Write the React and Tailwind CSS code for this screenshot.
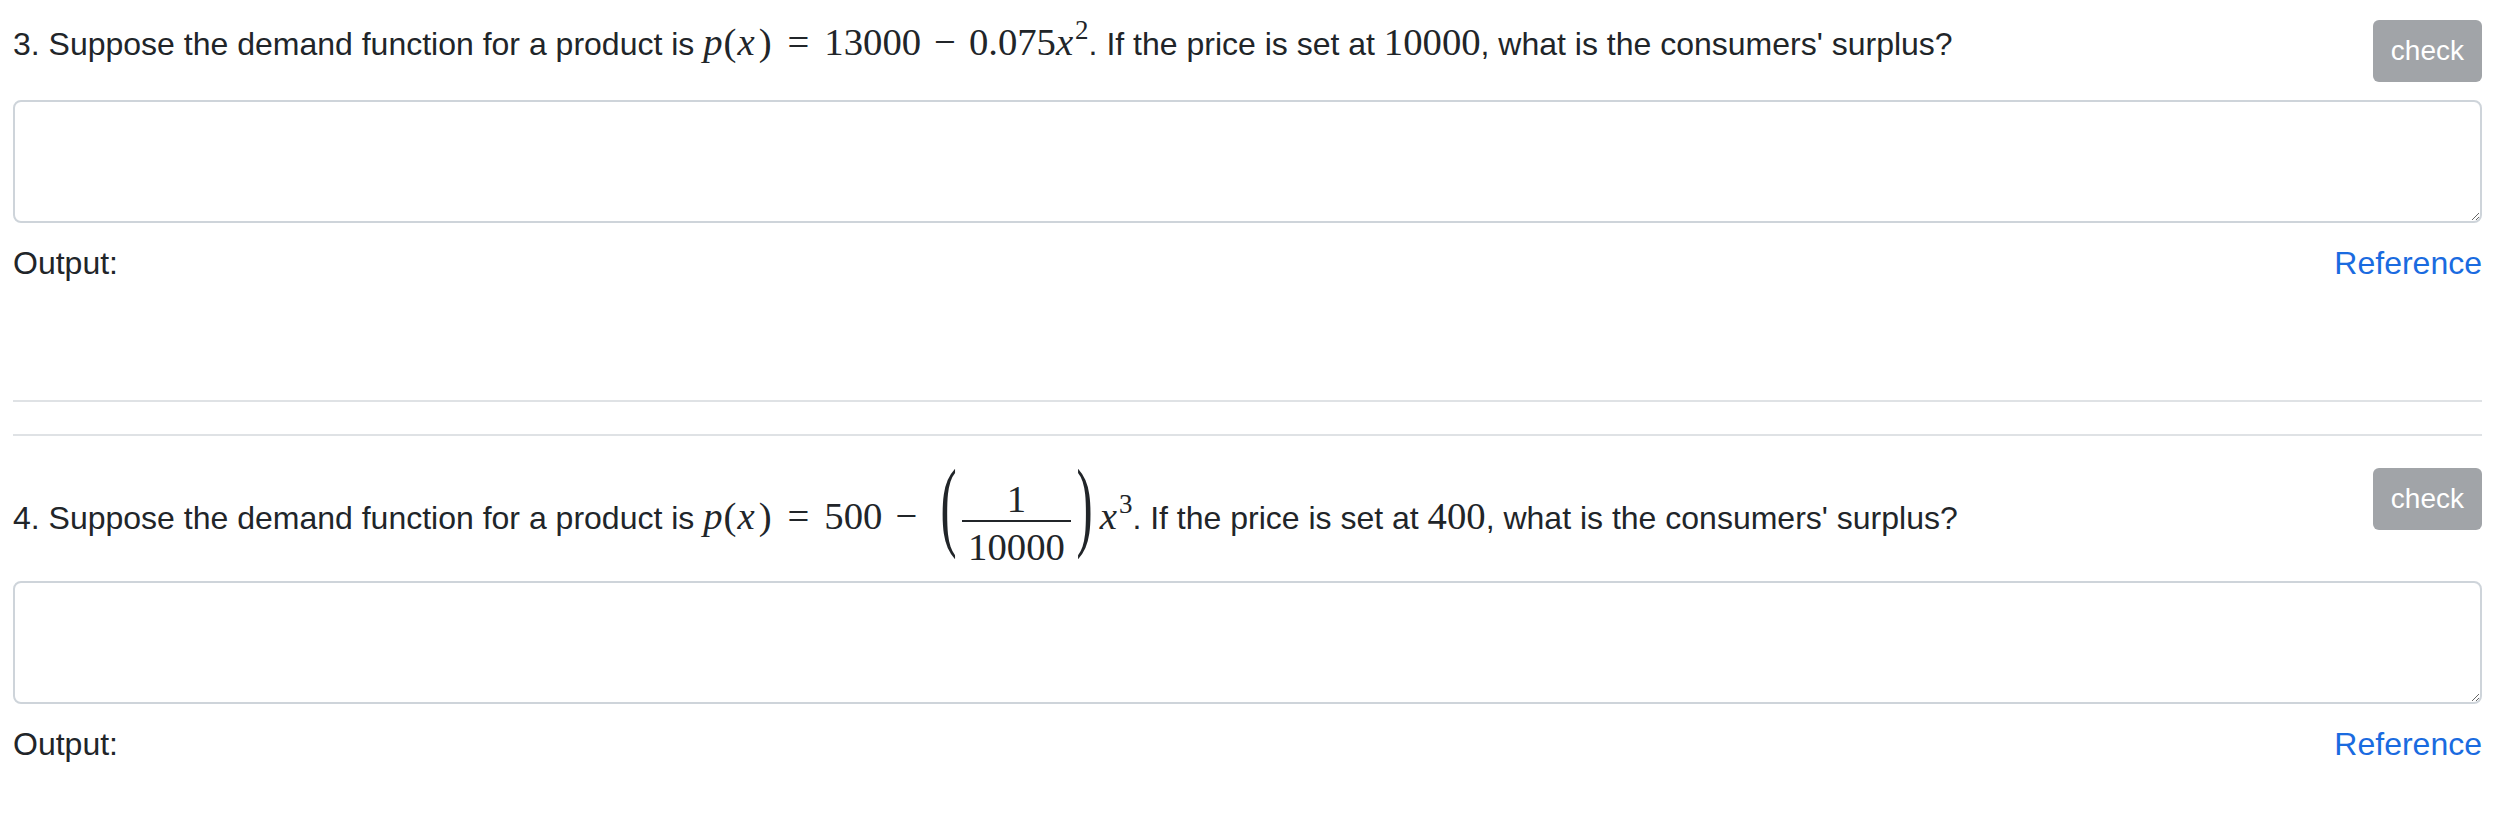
import React from 'react';

const serif = "font-['Liberation_Serif',serif] text-[38.7px] leading-none";

// inline math atom
const M = ({ children, className = '' }) => (
  <span className={`${serif} ${className}`}>{children}</span>
);

const Sup = ({ children }) => (
  <span className="relative -top-[16px] font-['Liberation_Serif',serif] text-[27px] leading-none">
    {children}
  </span>
);

const Paren = ({ children }) => (
  <span className="inline-block font-['Liberation_Serif',serif] text-[38.7px] leading-none -translate-y-[16px] scale-x-[1.25] scale-y-[2.55]">
    {children}
  </span>
);

const Fraction = ({ top, bottom }) => (
  <span className="inline-flex flex-col items-stretch">
    <span className="block px-[6px] pt-[6px] text-center font-['Liberation_Serif',serif] text-[38.7px] leading-[42px]">{top}</span>
    <span className="block h-[2px] bg-[#212529]" />
    <span className="block px-[6px] pt-[4px] pb-[2px] text-center font-['Liberation_Serif',serif] text-[38.7px] leading-[42px]">{bottom}</span>
  </span>
);

// p(x)
const PofX = () => (
  <>
    <M className="italic">p</M>
    <M className="px-[1px]">(</M>
    <M className="pr-[3px] italic">x</M>
    <M className="px-[1px]">)</M>
  </>
);

const CheckButton = () => (
  <button
    disabled
    className="shrink-0 rounded-[6px] border-2 border-transparent bg-[#a1a4a8] px-[16px] py-[8px] text-[28px] leading-[42px] text-white"
  >
    check
  </button>
);

const Answer = () => (
  <>
    <textarea
      rows={2}
      className="block h-[123px] w-full rounded-[8px] border-2 border-[#ced4da] px-[24px] py-[12px] text-[32px] leading-[48px] outline-none"
    />
    <div className="mt-[16px] flex items-start justify-between text-[32px] leading-[48px]">
      <span>Output:</span>
      <a href="#" className="text-[#1a6be0]">Reference</a>
    </div>
  </>
);

export default function App() {
  return (
    <div className="min-h-screen bg-white pl-[13px] pr-[18px] pt-[20px] font-['Liberation_Sans',Arial,sans-serif] text-[#212529]">
      {/* Question 3 */}
      <section>
        <div className="flex items-start justify-between gap-4">
          <p className="mb-[32px] text-[32px] leading-[48px]">
            3. Suppose the demand function for a product is <PofX />
            <M className="mx-[15px]">=</M>
            <M>13000</M>
            <M className="mx-[13px]">−</M>
            <M>0.075</M>
            <M className="pr-[2px] italic">x</M>
            <Sup>2</Sup>. If the price is set at <M>10000</M>, what is the consumers' surplus?
          </p>
          <CheckButton />
        </div>
        <Answer />
      </section>

      <hr className="mt-[113px] border-t-2 border-[#dfe2e5]" />
      <hr className="mt-[32px] border-t-2 border-[#dfe2e5]" />

      {/* Question 4 */}
      <section className="mt-[32px]">
        <div className="flex items-start justify-between gap-4">
          <p className="mb-[32px] h-[81px] pt-[4px] text-[32px] leading-[48px]">
            4. Suppose the demand function for a product is <PofX />
            <M className="mx-[15px]">=</M>
            <M>500</M>
            <M className="mx-[13px]">−</M>
            <span className="ml-[12px] inline-flex items-center align-middle">
              <Paren>(</Paren>
              <span className="mx-[7px]">
                <Fraction top="1" bottom="10000" />
              </span>
              <Paren>)</Paren>
            </span>
            <M className="ml-[9px] pr-[2px] italic">x</M>
            <Sup>3</Sup>. If the price is set at <M>400</M>, what is the consumers' surplus?
          </p>
          <CheckButton />
        </div>
        <Answer />
      </section>
    </div>
  );
}
